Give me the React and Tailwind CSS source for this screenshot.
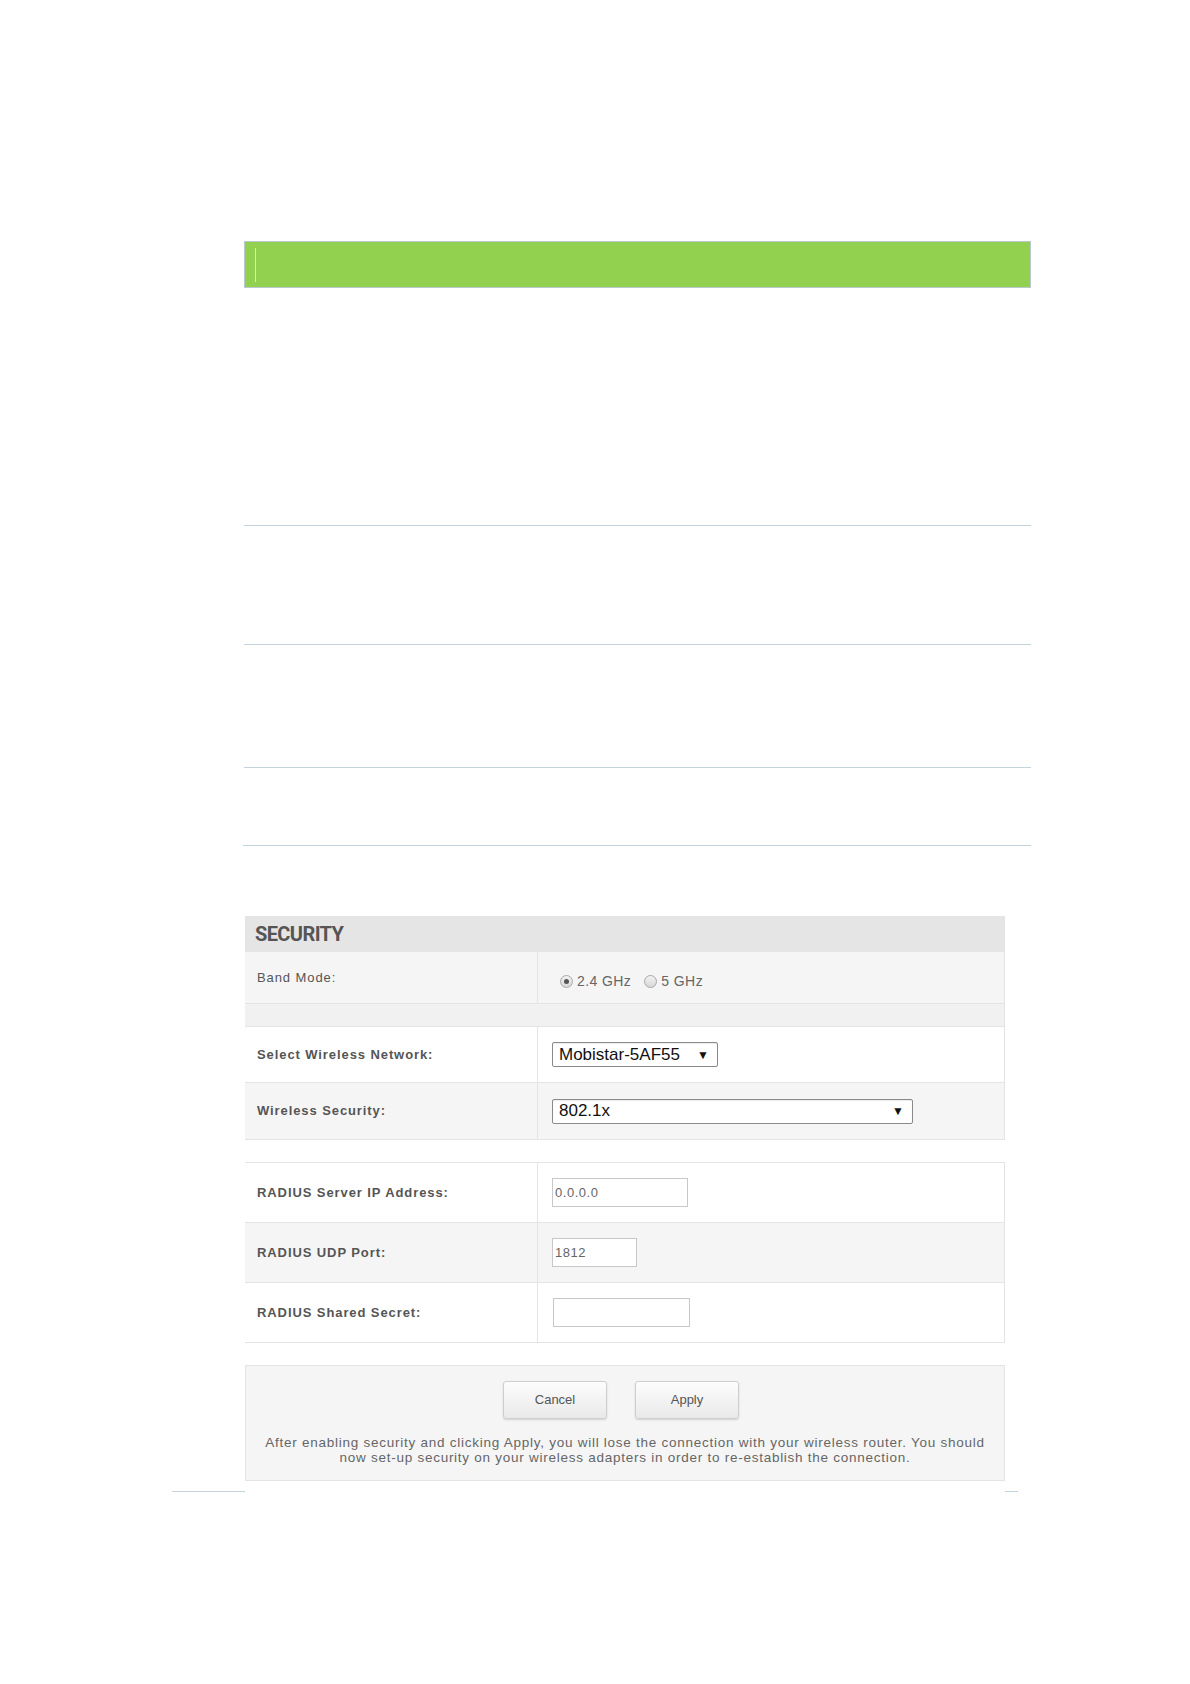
const labelFont = { fontFamily: '"Liberation Sans", Arial, sans-serif' };

function Radio({ checked }) {
  return (
    <span className="inline-flex h-[13px] w-[13px] items-center justify-center rounded-full border border-[#a8a8a8] bg-gradient-to-b from-[#f2f2f2] to-[#d8d8d8]">
      {checked && <span className="h-[5px] w-[5px] rounded-full bg-[#555]" />}
    </span>
  );
}

function Row({ label, bold, bg, h, children }) {
  return (
    <div className={`flex border-b border-[#e4e4e4] ${bg}`} style={{ height: h }}>
      <div
        className={`flex w-[293px] shrink-0 items-center border-r border-[#e4e4e4] pl-[12px] text-[13px] tracking-[0.07em] text-[#555] ${bold ? 'font-bold' : ''}`}
        style={labelFont}
      >
        {label}
      </div>
      <div className="flex flex-1 items-center pl-[14px]">{children}</div>
    </div>
  );
}

function Select({ value, width }) {
  return (
    <div
      className="flex h-[25px] items-center justify-between rounded-[2px] border border-[#8a8a8a] bg-white pl-[6px] pr-[8px] text-[17px] text-[#111] shadow-[inset_0_1px_1px_rgba(0,0,0,0.08)]"
      style={{ width, fontFamily: '"Liberation Sans Narrow", "Liberation Sans", Arial, sans-serif' }}
    >
      <span>{value}</span>
      <span className="text-[12px]">▼</span>
    </div>
  );
}

function TextInput({ value, width }) {
  return (
    <div
      className="flex h-[29px] items-center border border-[#c8c8c8] bg-white pl-[2px] text-[13px] tracking-[0.04em] text-[#666]"
      style={{ width, ...labelFont }}
    >
      {value}
    </div>
  );
}

function Button({ children }) {
  return (
    <button
      className="h-[38px] w-[104px] rounded-[3px] border border-[#cfcfcf] bg-gradient-to-b from-[#fdfdfd] to-[#e9e9e9] text-[13px] text-[#555] shadow-[0_1px_2px_rgba(0,0,0,0.15)]"
      style={labelFont}
    >
      {children}
    </button>
  );
}

export default function App() {
  return (
    <div className="min-h-[1684px] w-[1190px] bg-white pt-[241px]">
      {/* green title bar */}
      <div className="ml-[244px] flex h-[47px] w-[787px] items-center border border-[#b9c9cf] bg-[#92d050] pl-[10px]">
        <div className="h-[34px] w-px bg-[#d6efc0]" />
      </div>

      {/* separators */}
      <div className="ml-[244px] mt-[237px] h-px w-[787px] bg-[#c2d3dc]" />
      <div className="ml-[244px] mt-[118px] h-px w-[787px] bg-[#c2d3dc]" />
      <div className="ml-[244px] mt-[122px] h-px w-[787px] bg-[#c2d3dc]" />
      <div className="ml-[243px] mt-[77px] h-px w-[788px] bg-[#c2d3dc]" />

      {/* security panel */}
      <div className="ml-[245px] mt-[70px] w-[760px]">
        <div className="border-r border-[#e4e4e4]">
          <div
            className="flex h-[36px] items-center bg-[#e5e5e5] pl-[10px] text-[20px] font-bold tracking-[-0.03em] text-[#555]"
            style={{ fontFamily: '"Liberation Sans Narrow", Roboto, sans-serif' }}
          >
            SECURITY
          </div>
          <Row label="Band Mode:" bg="bg-[#f5f5f5]" h={52}>
            <div className="ml-[8px] mt-[7px] flex items-center gap-[4px] text-[14px] tracking-[0.03em] text-[#666]" style={labelFont}>
              <Radio checked />
              <span className="mr-[9px]">2.4 GHz</span>
              <Radio />
              <span>5 GHz</span>
            </div>
          </Row>
          <div className="h-[23px] border-b border-[#e4e4e4] bg-[#f1f1f1]" />
          <Row label="Select Wireless Network:" bold bg="bg-white" h={56}>
            <Select value="Mobistar-5AF55" width={166} />
          </Row>
          <Row label="Wireless Security:" bold bg="bg-[#f5f5f5]" h={57}>
            <Select value="802.1x" width={361} />
          </Row>
        </div>

        <div className="mt-[22px] border-r border-t border-[#e4e4e4]">
          <Row label="RADIUS Server IP Address:" bold bg="bg-white" h={60}>
            <TextInput value="0.0.0.0" width={136} />
          </Row>
          <Row label="RADIUS UDP Port:" bold bg="bg-[#f5f5f5]" h={60}>
            <TextInput value="1812" width={85} />
          </Row>
          <Row label="RADIUS Shared Secret:" bold bg="bg-white" h={60}>
            <div className="ml-[1px]">
              <TextInput value="" width={137} />
            </div>
          </Row>
        </div>

        <div className="mt-[22px] flex h-[116px] flex-col items-center border border-[#e4e4e4] bg-[#f5f5f5] pt-[15px]">
          <div className="-ml-[8px] flex gap-[28px]">
            <Button>Cancel</Button>
            <Button>Apply</Button>
          </div>
          <p
            className="mt-[16px] text-center text-[13.5px] leading-[15px] tracking-[0.055em] text-[#666]"
            style={labelFont}
          >
            After enabling security and clicking Apply, you will lose the connection with your wireless router. You should
            <br />
            now set-up security on your wireless adapters in order to re-establish the connection.
          </p>
        </div>
      </div>

      {/* bottom line fragments */}
      <div className="mt-[10px] flex">
        <div className="ml-[172px] h-px w-[73px] bg-[#c2d3dc]" />
        <div className="w-[760px]" />
        <div className="h-px w-[13px] bg-[#c2d3dc]" />
      </div>
    </div>
  );
}
